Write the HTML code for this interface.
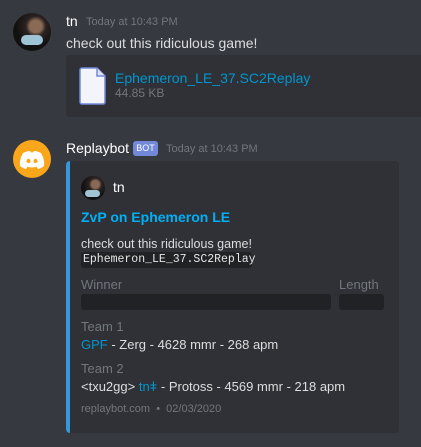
<!DOCTYPE html>
<html><head><style>
*{margin:0;padding:0;box-sizing:border-box}
body{width:421px;height:447px;background:#36393f;font-family:"Liberation Sans",sans-serif;position:relative;overflow:hidden;color:#dcddde}
.a{position:absolute;white-space:nowrap}
.av{position:absolute;border-radius:50%;overflow:hidden}
</style></head><body>
<div class="av" style="left:13px;top:13px;width:38px;height:38px;background:radial-gradient(circle at 60% 35%,#8a6a55 0 18%,#2a2220 30%,#111 60%)"><div style="position:absolute;left:8px;top:22px;width:22px;height:10px;background:#9fc4d6;border-radius:5px"></div></div>
<div class="a" style="left:66px;top:13px;font-size:14px;color:#fff">tn</div>
<div class="a" style="left:86px;top:16px;font-size:11px;color:#72767d">Today at 10:43 PM</div>
<div class="a" style="left:66px;top:35px;font-size:14px;color:#dcddde">check out this ridiculous game!</div>
<div class="a" style="left:66px;top:55px;width:360px;height:62px;background:#2f3136;border-radius:3px"></div>
<svg class="a" style="left:79px;top:67px" width="27" height="38" viewBox="0 0 27 38"><path d="M3 1h15l8 8v26a2 2 0 0 1-2 2H3a2 2 0 0 1-2-2V3a2 2 0 0 1 2-2z" fill="#f4f5fb" stroke="#7289da" stroke-width="1.5"/><path d="M18 1v8h8" fill="#dfe2f5" stroke="#7289da" stroke-width="1.5"/></svg>
<div class="a" style="left:115px;top:70px;font-size:14px;color:#0096cf">Ephemeron_LE_37.SC2Replay</div>
<div class="a" style="left:115px;top:86px;font-size:12px;color:#72767d">44.85 KB</div>
<div class="av" style="left:13px;top:140px;width:38px;height:38px;background:#faa61a"></div>
<svg class="a" style="left:18px;top:150px" width="28" height="20" viewBox="0 0 28 20"><path d="M5 3Q9 1 12 1l1 1.5Q14 2.3 15 2.5L16 1Q19 1 23 3Q27 10 26 16Q23 18.5 20 19L18.5 17Q20 16.5 21 16Q14 19 7 16Q8 16.5 9.5 17L8 19Q5 18.5 2 16Q1 10 5 3z" fill="#fff"/><ellipse cx="10.5" cy="11" rx="2" ry="2.2" fill="#faa61a"/><ellipse cx="17.5" cy="11" rx="2" ry="2.2" fill="#faa61a"/></svg>
<div class="a" style="left:66px;top:140px;font-size:14px;color:#fff">Replaybot</div>
<div class="a" style="left:133px;top:141px;width:25px;height:15px;background:#7289da;border-radius:3px;color:#fff;font-size:9px;line-height:15px;text-align:center">BOT</div>
<div class="a" style="left:166px;top:143px;font-size:11px;color:#72767d">Today at 10:43 PM</div>
<div class="a" style="left:66px;top:161px;width:333px;height:272px;background:#2f3136;border-left:4px solid #3498db;border-radius:4px"></div>
<div class="av" style="left:81px;top:176px;width:24px;height:24px;background:radial-gradient(circle at 60% 35%,#8a6a55 0 18%,#2a2220 30%,#111 60%)"><div style="position:absolute;left:4px;top:14px;width:15px;height:7px;background:#9fc4d6;border-radius:4px"></div></div>
<div class="a" style="left:113px;top:179px;font-size:14px;color:#fff">tn</div>
<div class="a" style="left:81px;top:209px;font-size:14px;color:#00b0f4;font-weight:bold">ZvP on Ephemeron LE</div>
<div class="a" style="left:81px;top:237px;font-size:12.5px;color:#dcddde">check out this ridiculous game!</div>
<div class="a" style="left:81px;top:252px;width:171px;height:16px;background:#202225;border-radius:3px;font-family:'Liberation Mono',monospace;font-size:11.5px;line-height:16px;padding-left:2px;color:#e6e6e6">Ephemeron_LE_37.SC2Replay</div>
<div class="a" style="left:81px;top:277px;font-size:13px;color:#72767d">Winner</div>
<div class="a" style="left:339px;top:277px;font-size:13px;color:#72767d">Length</div>
<div class="a" style="left:81px;top:294px;width:250px;height:16px;background:#202225;border-radius:3px"></div>
<div class="a" style="left:339px;top:294px;width:45px;height:16px;background:#202225;border-radius:3px"></div>
<div class="a" style="left:81px;top:319px;font-size:13px;color:#72767d">Team 1</div>
<div class="a" style="left:81px;top:337px;font-size:13px;color:#dcddde"><span style="color:#0096cf">GPF</span> - Zerg - 4628 mmr - 268 apm</div>
<div class="a" style="left:81px;top:361px;font-size:13px;color:#72767d">Team 2</div>
<div class="a" style="left:81px;top:379px;font-size:13px;color:#dcddde">&lt;txu2gg&gt; <span style="color:#0096cf">tnǂ</span> - Protoss - 4569 mmr - 218 apm</div>
<div class="a" style="left:81px;top:403px;font-size:11px;color:#72767d">replaybot.com &nbsp;•&nbsp; 02/03/2020</div>
</body></html>
